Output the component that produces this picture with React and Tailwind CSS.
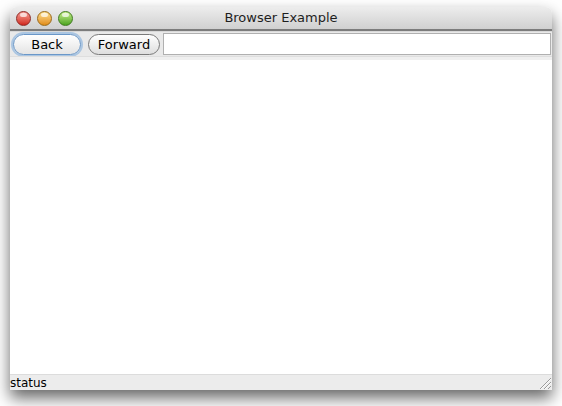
import React from 'react'

const FONT = { fontFamily: '"DejaVu Sans", "Liberation Sans", sans-serif' }

function Light({ from, to, ring }) {
  return (
    <span
      className={`w-[15px] h-[15px] rounded-full border ${ring} bg-gradient-to-b ${from} ${to} relative`}
    >
      <span className="absolute left-[3px] top-[1px] w-[7px] h-[4px] rounded-full bg-white/70" />
    </span>
  )
}

function Grip() {
  return (
    <svg width="14" height="14" viewBox="0 0 14 14">
      <line x1="2" y1="13" x2="13" y2="2" stroke="#9a9a9a" strokeWidth="1" />
      <line x1="6" y1="13" x2="13" y2="6" stroke="#9a9a9a" strokeWidth="1" />
      <line x1="10" y1="13" x2="13" y2="10" stroke="#9a9a9a" strokeWidth="1" />
      <line x1="3" y1="13" x2="13" y2="3" stroke="#ffffff" strokeWidth="1" opacity="0.8" />
      <line x1="7" y1="13" x2="13" y2="7" stroke="#ffffff" strokeWidth="1" opacity="0.8" />
    </svg>
  )
}

export default function App() {
  return (
    <div className="w-[562px] h-[406px] bg-white pl-[10px] pt-[7px]" style={FONT}>
      <div className="w-[542px] h-[383px] flex flex-col rounded-t-[6px] shadow-[0_8px_16px_rgba(0,0,0,0.6)] bg-white">
        {/* title bar */}
        <div className="relative h-[24px] flex items-center rounded-t-[6px] bg-gradient-to-b from-[#ededed] to-[#d0d0d0] border-b-2 border-[#7c7c7c] px-[6px] gap-[6px]">
          <Light from="from-[#f59a94]" to="to-[#d0211a]" ring="border-[#8e2a25]" />
          <Light from="from-[#fde08a]" to="to-[#e08c10]" ring="border-[#9a6a1a]" />
          <Light from="from-[#c8f08a]" to="to-[#4aa41c]" ring="border-[#3f7a1f]" />
          <span className="absolute inset-0 flex items-center justify-center text-[13px] text-[#1e1e1e] pointer-events-none">
            Browser Example
          </span>
        </div>

        {/* toolbar */}
        <div className="h-[25px] flex items-center bg-[#e9e9e9] border-t border-[#d8d8d8] pl-[3px] pr-[1px]">
          <button className="w-[68px] h-[21px] rounded-full border border-[#6a97c8] bg-gradient-to-b from-[#ffffff] to-[#e4e4e4] shadow-[0_0_0_2px_rgba(120,170,220,0.55)] text-[13px] text-black">
            Back
          </button>
          <button className="ml-[7px] w-[72px] h-[21px] rounded-full border border-[#7a7a7a] bg-gradient-to-b from-[#ffffff] to-[#dedede] text-[13px] text-black">
            Forward
          </button>
          <input className="ml-[3px] flex-1 h-[22px] bg-white border border-[#b0b0b0] outline-none" />
        </div>
        <div className="h-[4px] bg-[#efefef] border-t border-[#dedede]" />

        {/* content */}
        <div className="flex-1 bg-white" />

        {/* status bar */}
        <div className="h-[16px] flex items-center justify-between bg-[#ececec] border-t border-[#dcdcdc]">
          <span className="text-[12px] leading-none text-black">status</span>
          <Grip />
        </div>
      </div>
    </div>
  )
}
